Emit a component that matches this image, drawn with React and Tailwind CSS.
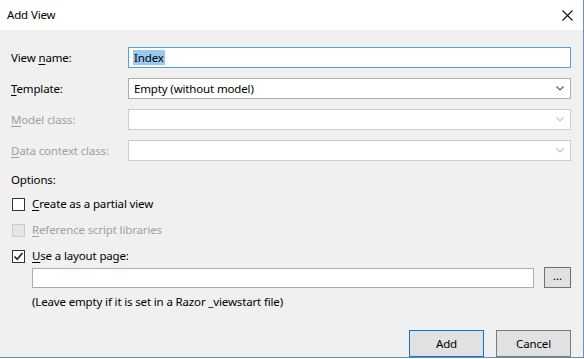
import React from "react";

const font = { fontFamily: '"Noto Sans", "Segoe UI", sans-serif' };

function Chevron({ disabled }) {
  return (
    <svg width="8" height="5" viewBox="0 0 8 5" className="shrink-0">
      <path d="M0.5 0.5 L4 4 L7.5 0.5" fill="none" stroke={disabled ? "#c4c4c4" : "#5a5a5a"} strokeWidth="1.2" />
    </svg>
  );
}

function Check({ checked, disabled }) {
  return (
    <div
      className={
        "w-[13px] h-[13px] border flex items-center justify-center shrink-0 " +
        (disabled ? "border-[#cccccc] bg-[#e6e6e6]" : "border-[#333333] bg-white")
      }
    >
      {checked && (
        <svg width="11" height="11" viewBox="0 0 11 11">
          <path d="M1.5 5.5 L4.2 8.3 L9.5 2" fill="none" stroke="#222" strokeWidth="1.6" />
        </svg>
      )}
    </div>
  );
}

function U({ children }) {
  return <span className="underline underline-offset-[2px] decoration-1">{children}</span>;
}

export default function App() {
  return (
    <div className="w-[584px] h-[359px] bg-white" style={font}>
      <div className="w-[584px] h-[358px] border-r border-b border-[#6b8fbf] flex flex-col text-[11.5px] tracking-[-0.15px] text-black">
        <div className="h-[30px] bg-white flex items-center justify-between pl-[7px] pr-[10px] shrink-0">
          <span className="leading-none mt-[-1px]">Add View</span>
          <svg width="11" height="11" viewBox="0 0 11 11">
            <path d="M0.5 0.5 L10.5 10.5 M10.5 0.5 L0.5 10.5" stroke="#111" strokeWidth="1.1" />
          </svg>
        </div>
        <div className="flex-1 bg-[#f0f0f0] pl-[11px] pr-[12px] pt-[17px] flex flex-col">
          <div className="flex items-center h-[21px]">
            <div className="w-[117px]">View <U>n</U>ame:</div>
            <div className="flex-1 h-[21px] border border-[#569de5] bg-white flex items-center pl-[4px]">
              <span className="bg-[#99c9ef] px-[1px] leading-[15px]">Index</span>
            </div>
          </div>
          <div className="flex items-center h-[21px] mt-[10px]">
            <div className="w-[117px]"><U>T</U>emplate:</div>
            <div className="flex-1 h-[21px] border border-[#adadad] bg-white flex items-center pl-[5px] pr-[6px] justify-between">
              <span>Empty (without model)</span>
              <Chevron />
            </div>
          </div>
          <div className="flex items-center h-[21px] mt-[10px] text-[#a0a0a0]">
            <div className="w-[117px]"><U>M</U>odel class:</div>
            <div className="flex-1 h-[21px] border border-[#cccccc] bg-white flex items-center pr-[6px] justify-end">
              <Chevron disabled />
            </div>
          </div>
          <div className="flex items-center h-[21px] mt-[10px] text-[#a0a0a0]">
            <div className="w-[117px]"><U>D</U>ata context class:</div>
            <div className="flex-1 h-[21px] border border-[#cccccc] bg-white flex items-center pr-[6px] justify-end">
              <Chevron disabled />
            </div>
          </div>
          <div className="h-[16px] mt-[11px] flex items-center">Options:</div>
          <div className="flex items-center h-[14px] mt-[9px] pl-[1px] gap-[7px]">
            <Check />
            <span><U>C</U>reate as a partial view</span>
          </div>
          <div className="flex items-center h-[14px] mt-[12px] pl-[1px] gap-[7px] text-[#a0a0a0]">
            <Check disabled />
            <span><U>R</U>eference script libraries</span>
          </div>
          <div className="flex items-center h-[14px] mt-[12px] pl-[1px] gap-[7px]">
            <Check checked />
            <span><U>U</U>se a layout page:</span>
          </div>
          <div className="flex items-center mt-[4px] pl-[21px]">
            <div className="w-[502px] h-[20px] border border-[#adadad] bg-white" />
            <div className="ml-[10px] w-[27px] h-[21px] border border-[#707070] bg-[#e1e1e1] flex items-center justify-center leading-none pb-[3px]">...</div>
          </div>
          <div className="pl-[21px] mt-[6px] h-[16px] flex items-center">(Leave empty if it is set in a Razor _viewstart file)</div>
          <div className="flex justify-end gap-[12px] mt-[20px]">
            <div className="w-[75px] h-[27px] border border-[#0078d7] bg-[#e1e1e1] flex items-center justify-center">Add</div>
            <div className="w-[75px] h-[27px] border border-[#7a7a7a] bg-[#e1e1e1] flex items-center justify-center">Cancel</div>
          </div>
        </div>
      </div>
    </div>
  );
}
